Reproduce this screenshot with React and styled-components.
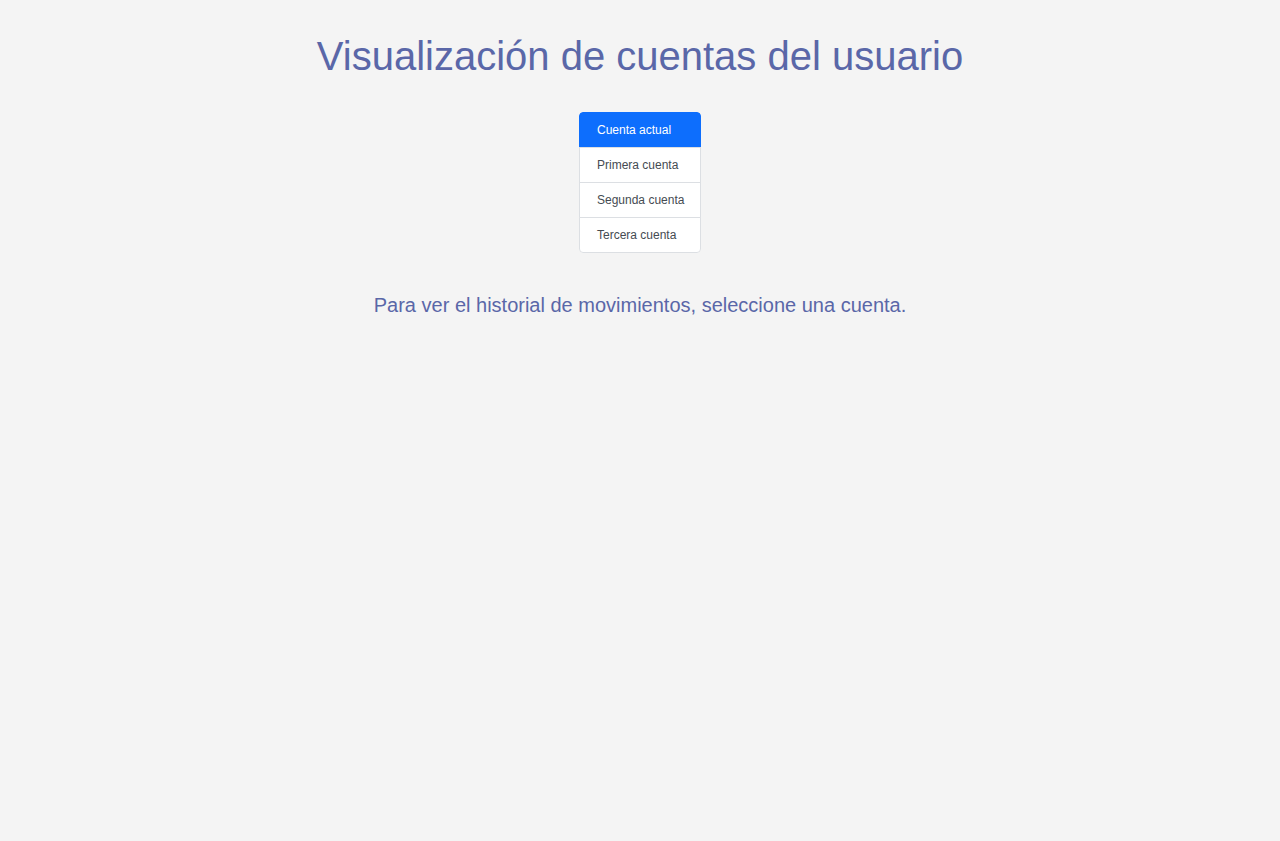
import React, { useState } from 'react';
import styled, { createGlobalStyle } from 'styled-components';

const accounts = ['Cuenta actual', 'Primera cuenta', 'Segunda cuenta', 'Tercera cuenta'];

function App() {
  const [selected, setSelected] = useState(0);

  return (
    <>
      <GlobalStyle />
      <Page>
        <Title>Visualización de cuentas del usuario</Title>
        <AccountList>
          {accounts.map((name, idx) => (
            <AccountItem
              key={name}
              $active={idx === selected}
              onClick={() => setSelected(idx)}
            >
              {name}
            </AccountItem>
          ))}
        </AccountList>
        <Hint>Para ver el historial de movimientos, seleccione una cuenta.</Hint>
      </Page>
    </>
  );
}

export default App;

const GlobalStyle = createGlobalStyle`
  html, body {
    margin: 0;
    background: #f4f4f4;
    font-family: "Liberation Sans", Arial, sans-serif;
  }
`;
const Page = styled.div`
  min-height: 841px;
  display: flex;
  flex-direction: column;
  align-items: center;
  padding-top: 32px;
  box-sizing: border-box;
`;
const Title = styled.h1`
  margin: 0;
  font-size: 40px;
  font-weight: 400;
  line-height: 48px;
  color: #5a67a8;
`;
const AccountList = styled.div`
  margin-top: 32px;
  width: 122px;
  display: flex;
  flex-direction: column;
  border-radius: 4px;
  overflow: hidden;
`;
const AccountItem = styled.button`
  position: relative;
  height: 36px;
  padding: 0 0 0 17px;
  border: 1px solid ${({ $active }) => ($active ? '#0d6efd' : '#dcdfe3')};
  background: ${({ $active }) => ($active ? '#0d6efd' : '#fff')};
  color: ${({ $active }) => ($active ? '#fff' : '#454b52')};
  font-family: "Liberation Sans", Arial, sans-serif;
  font-size: 12px;
  text-align: left;
  cursor: pointer;
  & + & {
    margin-top: -1px;
  }
  &:first-child {
    border-radius: 4px 4px 0 0;
  }
  &:last-child {
    border-radius: 0 0 4px 4px;
  }
`;
const Hint = styled.p`
  margin: 40px 0 0;
  font-size: 20px;
  line-height: 24px;
  color: #5a67a8;
`;
